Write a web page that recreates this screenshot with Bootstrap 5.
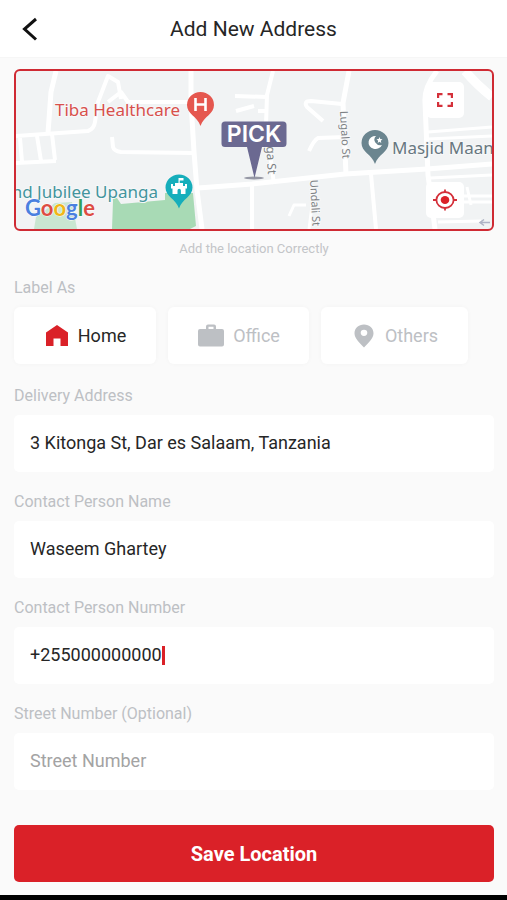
<!DOCTYPE html>
<html lang="en">
<head>
<meta charset="utf-8">
<meta name="viewport" content="width=device-width, initial-scale=1">
<title>Add New Address</title>
<link href="https://cdn.jsdelivr.net/npm/bootstrap@5.3.0/dist/css/bootstrap.min.css" rel="stylesheet">
<style>
  :root { --brand: #da2128; --muted: #bdc0c4; --ink: #262626; --gutter: 14px; }
  body { font-family: Roboto, "Liberation Sans", sans-serif; background: #fafafa; color: var(--ink); }
  .topbar { height: 58px; padding: 0 var(--gutter); border-bottom: 1px solid #f6f6f6; }
  .topbar h1 { font-size: 21px; line-height: 24px; }
  .side-slot { width: 32px; height: 32px; }
  .page-body { padding: 11px 13px 13px 14px; }
  .map-frame { border: 2px solid #cf2a33; border-radius: 6px; background: #f1f3f4; }
  .map-frame svg.map-art { height: 158px; }
  .map-btn { width: 38px; height: 36px; border-radius: 5px; background: #fff; }
  .map-tools { top: 11px; right: 28px; bottom: 11px; }
  .map-note { font-size: 13px; line-height: 18px; color: #c3c5c8; margin-top: 9px; }
  .field-label { font-size: 16px; line-height: 20px; color: var(--muted); margin-bottom: 9px; }
  .kind-set { margin-bottom: 2px; }
  .kinds { display: grid; grid-template-columns: 142fr 141fr 147fr; gap: 12px; margin-right: 26px; }
  .kind { height: 57px; border-radius: 6px; background: #fff; color: var(--muted); font-size: 18px; line-height: 24px; box-shadow: 0 0 5px rgba(0,0,0,.03); cursor: pointer; }
  .btn-check:checked + .kind { color: var(--ink); }
  .btn-check:checked + .kind svg { color: var(--brand); }
  .field-box { height: 57px; border-radius: 5px; background: #fff; padding: 0 16px; }
  .field-box input { font-size: 18px; line-height: 24px; height: 55px; color: var(--ink); outline: 0; caret-color: var(--brand); }
  .field-box input::placeholder { color: #a3a3a3; opacity: 1; }
  .field-box .phone { width: 13ch; }
  .cursor-bar { width: 3px; height: 19px; background: var(--brand); }
  .save-btn { height: 57px; margin-top: 15px; border-radius: 5px; background: var(--brand); color: #fff; font-size: 20px; line-height: 24px; font-weight: 700; }
  .save-btn:hover { background: #bd1a21; color: #fff; }
  .system-bar { height: 5px; background: #000; }
  .stack { display: grid; gap: 20px; }
</style>
</head>
<body>
<div class="min-vh-100 d-flex flex-column">
  <header class="topbar bg-white d-flex align-items-center justify-content-between">
    <button type="button" class="btn p-0 border-0 side-slot d-flex align-items-center" aria-label="Back">
      <svg width="32" height="32" viewBox="0 0 32 32" fill="none" stroke="#111" stroke-width="3" aria-hidden="true"><path d="M22 6 10.500 16 22 26.500"/></svg>
    </button>
    <h1 class="m-0 fw-normal">Add New Address</h1>
    <span class="side-slot"></span>
  </header>

  <main class="page-body flex-grow-1">
    <div class="map-frame position-relative overflow-hidden">
      <svg class="map-art d-block w-100" viewBox="16 71 476 158" preserveAspectRatio="xMidYMid slice" role="img" aria-label="Map">
        <g fill="#a8dab5">
          <path d="M113 201 Q112 197 117 198 L121 204 L165 200 V193 H193 L196 226 L190 229 H112Z"/>
          <path d="M36 217 55 203 72 202 77 229H34Z" opacity=".55"/>
        </g>
        <g fill="none" stroke="#fff" stroke-width="5" stroke-linejoin="round">
          <path d="M56 71 51 92 48 133"/>
          <path d="M16 136 88 131Q94 129 95 122L98 102 108 76 118 82 121 99M108 102 121 92 128 102H191" stroke-width="4"/>
          <path d="M20 138 22 162M37 136 41 161M52 134 55 160M16 163 56 161" stroke-width="4"/>
          <path d="M191 71V102L194 152 197 190 202 229"/>
          <path d="M112 137 113 147Q114 151 121 152L193 153" stroke-width="4"/>
          <path d="M198 188 252 184 345 174 427 169 492 164" stroke-width="5"/>
          <path d="M252 184V229M371 174 376 229" stroke-width="4"/>
          <path d="M273 71 267 95 266 125 274 184M235 96 267 97M236 111 254 106M258 111H266" stroke-width="4"/>
          <path d="M349 71 343 103 346 175" stroke-width="5"/>
          <path d="M342 104 311 101Q303 101 307 107L323 121M345 137 318 138Q314 140 309 151" stroke-width="4"/>
          <path d="M437 71Q424 87 425 102L428 175 435 229" stroke-width="5"/>
          <path d="M428 132 492 127M428 139 492 136M430 178 492 175M454 196H492M467 187 471 205M430 202H492M438 222 481 221M289 216 294 205 306 205M314 190 309 229" stroke-width="3"/>
          <path d="M465 71Q477 85 492 97" stroke-width="9"/>
        </g>
        <g font-family="'Noto Sans', 'Open Sans', sans-serif">
          <g stroke="#f7f8f9" stroke-width="2" paint-order="stroke" font-size="17">
            <text x="55" y="116" fill="#d8504c">Tiba Healthcare</text>
            <text x="158" y="198" text-anchor="end" fill="#43959d">nd Jubilee Upanga</text>
            <text x="392" y="154" fill="#687780">Masjid Maan</text>
          </g>
          <g fill="#7c8083" font-size="11" stroke="#f7f8f9" stroke-width="2" paint-order="stroke">
            <text transform="translate(340 111) rotate(87)">Lugalo St</text>
            <text transform="translate(310 180) rotate(87)">Undali St</text>
            <text transform="translate(266 139) rotate(87)" font-size="12">nga St</text>
          </g>
        </g>
        <text x="25" y="216" font-family="Lato, sans-serif" font-size="22" font-weight="700" stroke="#fff" stroke-width="1" paint-order="stroke"><tspan fill="#4a80df">G</tspan><tspan fill="#dd4d43">o</tspan><tspan fill="#efb719">o</tspan><tspan fill="#4a80df">g</tspan><tspan fill="#34a057">l</tspan><tspan fill="#dd4d43">e</tspan></text>

        <path d="M200.500 92a13.500 13 0 0 1 13.500 13c0 9-10 11-13.500 21-3.500-10-13.500-12-13.500-21a13.500 13 0 0 1 13.500-13Z" fill="#e5574f"/>
        <path d="M195.500 98V111M205.500 98V111M195.500 104.500H205.500" fill="none" stroke="#fff" stroke-width="2.600"/>
        <path d="M179 174.500a13.500 13 0 0 1 13.500 13c0 9-10 11-13.500 21-3.500-10-13.500-12-13.500-21a13.500 13 0 0 1 13.500-13Z" fill="#16aebb"/>
        <path fill="#fff" fill-rule="evenodd" d="M178.500 178H183.500V180.500H179.700V183H183V186H185V184H187V188.500H185.500V194H172.500V188.500H171V184H173V186H175V183H178.500ZM177.500 194V190.500A1.700 1.700 0 0 1 180.900 190.500V194Z"/>
        <path d="M375 130a13.500 13 0 0 1 13.500 13c0 9-10 11-13.500 21-3.500-10-13.500-12-13.500-21a13.500 13 0 0 1 13.500-13Z" fill="#6b858f"/>
        <path fill="#fff" d="M376 136a7 6.500 0 1 0 6 9 6 5.500 0 0 1-6-9Z"/>
        <path fill="#fff" d="m379.500 137 .8 2 2.200.2-1.700 1.500.5 2.200-1.800-1.200-1.900 1.200.6-2.200-1.700-1.500 2.200-.2Z"/>

        <ellipse cx="254" cy="178" rx="10" ry="1.500" fill="#9698a5"/>
        <path d="M225 121.500H283Q286.500 121.500 286.500 125V143.500Q286.500 147 283 147H262L254.500 178 247 147H225Q221.500 147 221.500 143.500V125Q221.500 121.500 225 121.500Z" fill="#6b6991"/>
        <text x="254" y="142" text-anchor="middle" fill="#fff" font-family="Inter, sans-serif" font-size="23" font-weight="600">PICK</text>
        <path d="M490 222.500H480M484 219.500 480 222.500 484 225.500" stroke="#aeb3c5" stroke-width="1.500" fill="none"/>
      </svg>
      <div class="map-tools position-absolute d-flex flex-column justify-content-between">
        <button type="button" class="map-btn btn p-0 border-0 d-flex align-items-center justify-content-center" aria-label="Full screen">
          <svg width="16" height="14" viewBox="0 0 16 14" fill="none" stroke="#d4303a" stroke-width="2.200" aria-hidden="true"><path d="M1.100 5V1.100H5.500M10.500 1.100H14.900V5M14.900 9V12.900H10.500M5.500 12.900H1.100V9"/></svg>
        </button>
        <button type="button" class="map-btn btn p-0 border-0 d-flex align-items-center justify-content-center" aria-label="My location">
          <svg width="24" height="22" viewBox="0 0 24 22" fill="none" stroke="#d4303a" stroke-width="1.800" aria-hidden="true"><ellipse cx="12" cy="11" rx="8.600" ry="8"/><ellipse cx="12" cy="11" rx="4.300" ry="4" fill="#da2128" stroke="none"/><path d="M12 .5V4M12 18V21.500M0 11H4M20 11H24"/></svg>
        </button>
      </div>
    </div>
    <p class="map-note text-center mb-0">Add the location Correctly</p>

    <form class="stack pt-3" id="address-form">
      <fieldset class="kind-set mt-1">
        <legend class="field-label">Label As</legend>
        <div class="kinds">
          <input class="btn-check" type="radio" name="kind" id="kind-home" checked>
          <label class="kind d-flex align-items-center justify-content-center gap-2" for="kind-home">
            <svg width="26" height="24" viewBox="0 0 26 24" fill="currentColor" aria-hidden="true"><path d="M2 8.500 13 1 24 8.500V22H16.500V14.500H9.500V22H2Z"/></svg>
            Home
          </label>
          <input class="btn-check" type="radio" name="kind" id="kind-office">
          <label class="kind d-flex align-items-center justify-content-center gap-2" for="kind-office">
            <svg width="28" height="24" viewBox="0 0 28 24" fill="currentColor" aria-hidden="true"><path fill-rule="evenodd" d="M9 5V2.500Q9 .5 11 .5H17Q19 .5 19 2.500V5H25Q27 5 27 7V20.500Q27 22.500 25 22.500H3Q1 22.500 1 20.500V7Q1 5 3 5ZM11.500 5H16.500V2.800H11.500Z"/></svg>
            Office
          </label>
          <input class="btn-check" type="radio" name="kind" id="kind-others">
          <label class="kind d-flex align-items-center justify-content-center gap-2" for="kind-others">
            <svg width="26" height="24" viewBox="0 0 26 24" fill="currentColor" aria-hidden="true"><path fill-rule="evenodd" d="M13 .5C7.500.5 3.500 4.300 3.500 9.200 3.500 14.500 8.500 18.500 13 23.500 17.500 18.500 22.500 14.500 22.500 9.200 22.500 4.300 18.500.5 13 .5ZM13 5.700A3.300 3.100 0 1 1 13 11.900 3.300 3.100 0 1 1 13 5.700Z"/></svg>
            Others
          </label>
        </div>
      </fieldset>

      <div>
        <label class="field-label d-block" for="address">Delivery Address</label>
        <div class="field-box"><input class="w-100 border-0 p-0 bg-transparent" type="text" id="address" value="3 Kitonga St, Dar es Salaam, Tanzania"></div>
      </div>
      <div>
        <label class="field-label d-block" for="person">Contact Person Name</label>
        <div class="field-box"><input class="w-100 border-0 p-0 bg-transparent" type="text" id="person" value="Waseem Ghartey"></div>
      </div>
      <div>
        <label class="field-label d-block" for="phone">Contact Person Number</label>
        <div class="field-box d-flex"><input class="phone border-0 p-0 bg-transparent" type="tel" id="phone" value="+255000000000"><span class="cursor-bar align-self-center"></span></div>
      </div>
      <div>
        <label class="field-label d-block" for="street">Street Number (Optional)</label>
        <div class="field-box"><input class="w-100 border-0 p-0 bg-transparent" type="text" id="street" placeholder="Street Number"></div>
      </div>
      <button type="submit" class="save-btn btn w-100 border-0">Save Location</button>
    </form>
  </main>
  <div class="system-bar"></div>
</div>
<script src="https://cdn.jsdelivr.net/npm/bootstrap@5.3.0/dist/js/bootstrap.bundle.min.js"></script>
</body>
</html>
